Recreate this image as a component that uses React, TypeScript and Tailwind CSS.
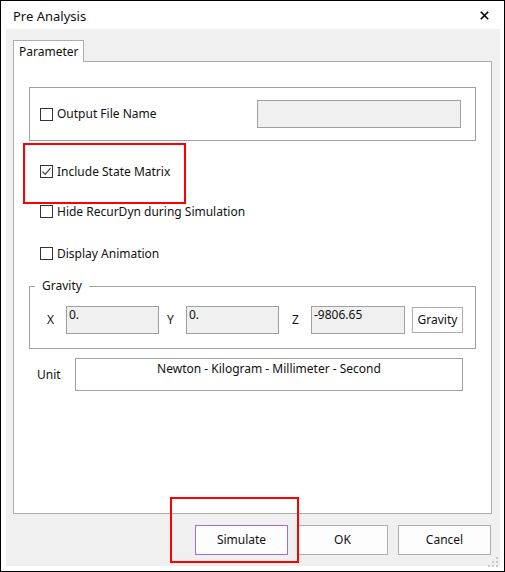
import type { ReactNode } from "react";

const font = { fontFamily: '"Noto Sans", "Open Sans", sans-serif' };

function CheckBox({ checked = false }: { checked?: boolean }) {
  return (
    <span className="flex h-[13px] w-[13px] shrink-0 items-center justify-center border border-[#333333] bg-white">
      {checked ? (
        <svg width="11" height="11" viewBox="0 0 11 11">
          <path d="M1.5 5.5 L4.2 8.3 L9.5 2.2" fill="none" stroke="#3c3c3c" strokeWidth="1.2" />
        </svg>
      ) : null}
    </span>
  );
}

function CheckRow({ label, checked = false }: { label: string; checked?: boolean }) {
  return (
    <div className="flex h-[13px] items-center">
      <CheckBox checked={checked} />
      <span className="ml-[4px] whitespace-nowrap text-[12px] leading-[16px] text-[#111]">{label}</span>
    </div>
  );
}

function ReadField({ value, width }: { value: string; width: string }) {
  return (
    <div className={`${width} h-[28px] border border-[#a0a0a0] bg-[#f0f0f0] px-[2px] text-[12px] leading-[16px] text-[#111]`}>
      {value}
    </div>
  );
}

function Button({ children, width, focus = false }: { children: ReactNode; width: string; focus?: boolean }) {
  return (
    <button
      type="button"
      className={`${width} h-[30px] border bg-[#fdfdfd] text-[12px] text-[#111] ${
        focus ? "border-[#a46ccc]" : "border-[#adadad]"
      }`}
    >
      {children}
    </button>
  );
}

export default function App() {
  return (
    <div className="relative flex h-[572px] w-[505px] flex-col border border-black bg-white" style={font}>
      {/* title bar */}
      <div className="flex h-[28px] items-center justify-between pl-[12px] pr-[15px] pt-[4px]">
        <span className="text-[13px] text-[#111]">Pre Analysis</span>
        <svg width="9" height="9" viewBox="0 0 9 9" className="mt-[-3px]">
          <path d="M0.8 0.8 L8.2 8.2 M8.2 0.8 L0.8 8.2" stroke="#000" strokeWidth="1.6" />
        </svg>
      </div>

      {/* client area */}
      <div className="mb-[5px] ml-[5px] mr-[4px] flex flex-1 flex-col bg-[#f0f0f0] pl-[7px] pt-[11px]">
        <div className="relative z-10 -mb-px flex h-[22px] w-[71px] items-center border border-b-0 border-[#adadad] bg-white pl-[5px] text-[12px] text-[#111]">
          Parameter
        </div>

        <div className="flex h-[453px] w-[479px] flex-col border border-[#adadad] bg-white">
          <div className="ml-[15px] mt-[25px] flex h-[54px] w-[447px] items-center border border-[#a0a0a0] pl-[10px] pr-[14px]">
            <CheckRow label="Output File Name" />
            <div className="ml-auto h-[28px] w-[204px] border border-[#a0a0a0] bg-[#f0f0f0]" />
          </div>

          <div className="ml-[9px] mt-[2px] h-[61px] w-[163px] border-2 border-[#ff0000] pl-[15px] pt-[20px]">
            <CheckRow label="Include State Matrix" checked />
          </div>

          <div className="ml-[26px] mt-[1px]">
            <CheckRow label="Hide RecurDyn during Simulation" />
          </div>
          <div className="ml-[26px] mt-[29px]">
            <CheckRow label="Display Animation" />
          </div>

          <fieldset className="ml-[15px] mt-[18px] w-[447px] border border-[#a0a0a0] pb-[14px] pt-[12px]">
            <legend className="ml-[5px] px-[7px] text-[12px] leading-[16px] text-[#111]">Gravity</legend>
            <div className="flex items-center text-[12px] text-[#111]">
              <span className="w-[36px] pl-[17px]">X</span>
              <ReadField value="0." width="w-[93px]" />
              <span className="w-[27px] pl-[8px]">Y</span>
              <ReadField value="0." width="w-[93px]" />
              <span className="w-[32px] pl-[13px]">Z</span>
              <ReadField value="-9806.65" width="w-[94px]" />
              <button
                type="button"
                className="ml-[7px] h-[26px] w-[51px] border border-[#adadad] bg-white text-[12px] text-[#111]"
              >
                Gravity
              </button>
            </div>
          </fieldset>

          <div className="ml-[23px] mt-[9px] flex items-center text-[12px] text-[#111]">
            <span className="w-[38px]">Unit</span>
            <div className="h-[33px] w-[388px] border border-[#a0a0a0] bg-white pt-[2px] text-center leading-[16px]">
              Newton - Kilogram - Millimeter - Second
            </div>
          </div>
        </div>

        <div className="mt-[11px] flex justify-end pr-[9px]">
          <div className="mr-[9px]">
            <Button width="w-[93px]" focus>
              Simulate
            </Button>
          </div>
          <div className="mr-[10px]">
            <Button width="w-[91px]">OK</Button>
          </div>
          <Button width="w-[93px]">Cancel</Button>
        </div>
      </div>

      {/* annotation around Simulate */}
      <div className="absolute left-[169px] top-[496px] h-[66px] w-[129px] border-2 border-[#ff0000]" />

      {/* resize grip */}
      <div className="absolute left-[495px] top-[556px] h-[2px] w-[2px] bg-[#c8c8c8]" />
      <div className="absolute left-[491px] top-[560px] h-[2px] w-[2px] bg-[#c8c8c8]" />
      <div className="absolute left-[495px] top-[560px] h-[2px] w-[2px] bg-[#c8c8c8]" />
      <div className="absolute left-[487px] top-[564px] h-[2px] w-[2px] bg-[#c8c8c8]" />
      <div className="absolute left-[491px] top-[564px] h-[2px] w-[2px] bg-[#c8c8c8]" />
      <div className="absolute left-[495px] top-[564px] h-[2px] w-[2px] bg-[#c8c8c8]" />
    </div>
  );
}
